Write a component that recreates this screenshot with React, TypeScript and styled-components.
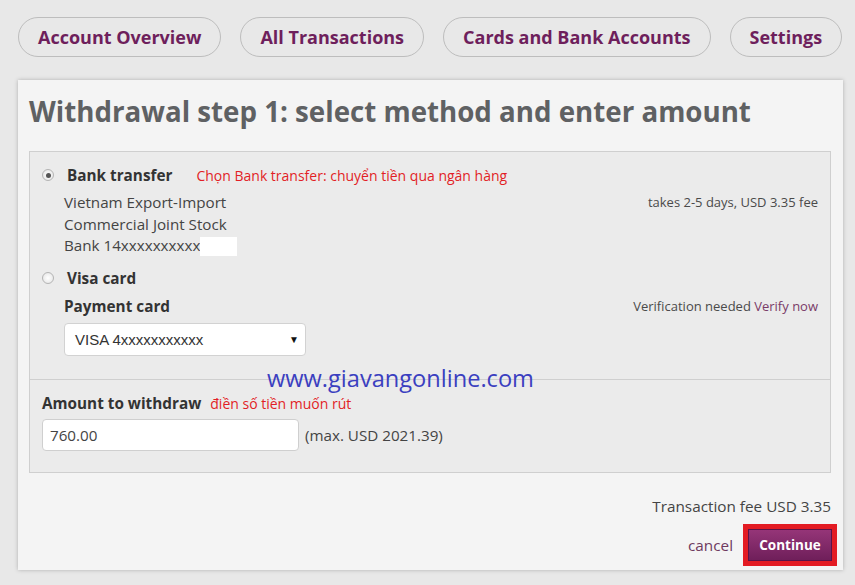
import * as React from 'react';
import styled, { createGlobalStyle } from 'styled-components';

const GlobalStyle = createGlobalStyle`
  html, body {
    margin: 0;
    padding: 0;
    background: #e8e8e8;
    font-family: "Open Sans", "Noto Sans", sans-serif;
  }
`;

const navItems = ['Account Overview', 'All Transactions', 'Cards and Bank Accounts', 'Settings'];

export default function App() {
  return (
    <Page>
      <GlobalStyle />
      <Nav>
        {navItems.map((item) => (
          <NavPill key={item}>{item}</NavPill>
        ))}
      </Nav>
      <Card>
        <Title>Withdrawal step 1: select method and enter amount</Title>
        <Panel>
          <MethodSection>
            <MethodRow>
              <Radio checked />
              <MethodLabel>Bank transfer</MethodLabel>
              <Note>Chọn Bank transfer: chuyển tiền qua ngân hàng</Note>
            </MethodRow>
            <DetailRow>
              <BankLines>
                <div>Vietnam Export-Import</div>
                <div>Commercial Joint Stock</div>
                <div>
                  Bank 14xxxxxxxxxx<Mask />
                </div>
              </BankLines>
              <SideInfo>takes 2-5 days, USD 3.35 fee</SideInfo>
            </DetailRow>
            <MethodRow $top={10}>
              <Radio />
              <MethodLabel>Visa card</MethodLabel>
            </MethodRow>
            <DetailRow $top={7}>
              <FieldLabel>Payment card</FieldLabel>
              <SideInfo>
                Verification needed <VerifyLink href="#">Verify now</VerifyLink>
              </SideInfo>
            </DetailRow>
            <SelectBox>
              <span>VISA 4xxxxxxxxxxx</span>
              <Arrow>▼</Arrow>
            </SelectBox>
          </MethodSection>
          <AmountSection>
            <AmountHead>
              <FieldLabel>Amount to withdraw</FieldLabel>
              <Note>điền số tiền muốn rút</Note>
            </AmountHead>
            <AmountRow>
              <AmountInput>760.00</AmountInput>
              <MaxText>(max. USD 2021.39)</MaxText>
            </AmountRow>
          </AmountSection>
          <Watermark>www.giavangonline.com</Watermark>
        </Panel>
        <FeeLine>Transaction fee USD 3.35</FeeLine>
        <Actions>
          <CancelLink href="#">cancel</CancelLink>
          <Highlight>
            <ContinueButton>Continue</ContinueButton>
          </Highlight>
        </Actions>
      </Card>
    </Page>
  );
}

const Page = styled.div`
  width: 855px;
  height: 585px;
  overflow: hidden;
  padding: 17px 12px 0 18px;
  box-sizing: border-box;
  background: #e8e8e8;
`;

const Nav = styled.div`
  display: flex;
  gap: 19px;
`;

const NavPill = styled.div`
  height: 40px;
  box-sizing: border-box;
  padding: 0 19px;
  display: flex;
  align-items: center;
  border: 1px solid #bdbdbd;
  border-radius: 20px;
  color: #6e1f5c;
  font-size: 18px;
  font-weight: 700;
  white-space: nowrap;
`;

const Card = styled.div`
  margin-top: 23px;
  width: 825px;
  height: 490px;
  box-sizing: border-box;
  padding: 0 12px 0 11px;
  background: #f4f4f4;
  box-shadow: 0 0 4px rgba(0, 0, 0, 0.25);
`;

const Title = styled.h1`
  margin: 0;
  padding: 11px 0 0;
  height: 71px;
  box-sizing: border-box;
  font-size: 27.7px;
  font-weight: 700;
  color: #5f6163;
  line-height: 40px;
`;

const Panel = styled.div`
  position: relative;
  background: #ebebeb;
  border: 1px solid #cfcfcf;
  height: 322px;
  box-sizing: border-box;
`;

const MethodSection = styled.div`
  padding: 12px 12px 0 12px;
  height: 228px;
  box-sizing: border-box;
  border-bottom: 1px solid #cfcfcf;
`;

const MethodRow = styled.div<{ $top?: number }>`
  display: flex;
  align-items: center;
  margin-top: ${(p) => p.$top || 0}px;
  height: 22px;
`;

const Radio = styled.span<{ checked?: boolean }>`
  width: 12px;
  height: 12px;
  border-radius: 50%;
  border: 1px solid #b4b4b4;
  background: radial-gradient(circle, #ffffff 0%, #e2e2e2 100%);
  box-sizing: border-box;
  display: flex;
  align-items: center;
  justify-content: center;
  margin-right: 13px;

  &::after {
    content: '';
    width: 5px;
    height: 5px;
    border-radius: 50%;
    background: ${(p) => (p.checked ? '#555' : 'transparent')};
  }
`;

const MethodLabel = styled.span`
  font-size: 15.3px;
  font-weight: 700;
  color: #333;
`;

const Note = styled.span`
  margin-left: 24px;
  font-size: 14px;
  color: #e21e26;
`;

const DetailRow = styled.div<{ $top?: number }>`
  display: flex;
  justify-content: space-between;
  align-items: flex-start;
  padding-left: 22px;
  margin-top: ${(p) => p.$top || 6}px;
`;

const BankLines = styled.div`
  font-size: 15.2px;
  line-height: 21.5px;
  color: #444;
`;

const Mask = styled.span`
  display: inline-block;
  width: 37px;
  height: 19px;
  background: #fff;
  vertical-align: -5px;
`;

const SideInfo = styled.span`
  font-size: 13px;
  color: #4a4a4a;
  line-height: 21.5px;
`;

const VerifyLink = styled.a`
  color: #7a3b68;
  text-decoration: none;
`;

const FieldLabel = styled.span`
  font-size: 15.3px;
  font-weight: 700;
  color: #333;
  line-height: 21px;
`;

const SelectBox = styled.div`
  margin: 6px 0 0 22px;
  width: 242px;
  height: 33px;
  box-sizing: border-box;
  background: #fff;
  border: 1px solid #d2d2d2;
  border-radius: 4px;
  display: flex;
  align-items: center;
  justify-content: space-between;
  padding: 0 6px 0 10px;
  font-family: "Liberation Sans", Arial, sans-serif;
  font-size: 15px;
  color: #333;
`;

const Arrow = styled.span`
  font-size: 10px;
  color: #111;
`;

const AmountSection = styled.div`
  padding: 12px 12px 0 12px;
`;

const AmountHead = styled.div`
  display: flex;
  align-items: center;
  height: 22px;

  & > span:last-child {
    margin-left: 9px;
  }
`;

const AmountRow = styled.div`
  display: flex;
  align-items: center;
  margin-top: 5px;
`;

const AmountInput = styled.div`
  width: 257px;
  height: 32px;
  box-sizing: border-box;
  background: #fff;
  border: 1px solid #cfcfcf;
  border-radius: 4px;
  padding: 0 7px;
  display: flex;
  align-items: center;
  font-size: 15.2px;
  color: #444;
`;

const MaxText = styled.span`
  margin-left: 6px;
  font-size: 15.2px;
  color: #444;
`;

const Watermark = styled.div`
  position: absolute;
  left: 237px;
  top: 211px;
  font-size: 23.6px;
  color: #3b3fc0;
  line-height: 30px;
  white-space: nowrap;
`;

const FeeLine = styled.div`
  margin-top: 22px;
  text-align: right;
  font-size: 15.3px;
  color: #444;
  line-height: 22px;
`;

const Actions = styled.div`
  margin-top: 7px;
  display: flex;
  justify-content: flex-end;
  align-items: center;
  margin-right: -6px;
`;

const CancelLink = styled.a`
  font-size: 15.3px;
  color: #6e3a5f;
  text-decoration: none;
  margin-right: 10px;
`;

const Highlight = styled.div`
  border: 3px solid #e31b23;
  padding: 2px;
  background: #e31b23;
`;

const ContinueButton = styled.button`
  width: 84px;
  height: 32px;
  border: 1px solid #5a1448;
  background: linear-gradient(#953578, #6f1f5a);
  color: #fff;
  font-family: "Open Sans", sans-serif;
  font-size: 13.5px;
  font-weight: 700;
  display: block;
`;
